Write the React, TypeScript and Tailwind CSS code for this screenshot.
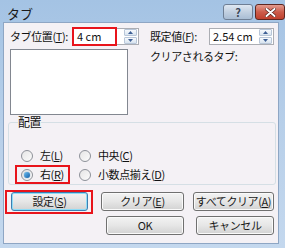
import React from "react";

function Spinner() {
  return (
    <div className="flex w-[13px] flex-col gap-px">
      <div className="flex h-[7px] items-center justify-center rounded-[1px] border border-[#b8c6d8] bg-gradient-to-b from-[#f7fafd] to-[#d8e3ef]">
        <svg width="5" height="3" viewBox="0 0 5 3">
          <path d="M0 3L2.5 0L5 3Z" fill="#3d5f95" />
        </svg>
      </div>
      <div className="flex h-[7px] items-center justify-center rounded-[1px] border border-[#b8c6d8] bg-gradient-to-b from-[#f7fafd] to-[#d8e3ef]">
        <svg width="5" height="3" viewBox="0 0 5 3">
          <path d="M0 0L2.5 3L5 0Z" fill="#3d5f95" />
        </svg>
      </div>
    </div>
  );
}

function Radio({ checked, children }: { checked?: boolean; children: React.ReactNode }) {
  return (
    <div className="flex items-center gap-[7px]">
      <span className="flex h-[12px] w-[12px] items-center justify-center rounded-full border border-[#8d9199] bg-gradient-to-br from-[#e6e6e6] to-[#fbfbfb]">
        {checked && (
          <span className="h-[6px] w-[6px] rounded-full bg-gradient-to-br from-[#6ec0f0] to-[#0d5ea8] shadow-[0_0_1px_#1b5ea0]" />
        )}
      </span>
      <span>{children}</span>
    </div>
  );
}

function Btn({ w, focused, children }: { w: string; focused?: boolean; children: React.ReactNode }) {
  return (
    <div
      className={`${w} flex h-[19px] items-center justify-center rounded-[3px] border bg-gradient-to-b from-[#f3f3f3] via-[#e6e6e6] to-[#d2d2d2] text-[#1a1a1a] ${
        focused ? "border-[#3c7fb1] shadow-[inset_0_0_0_1px_#8fdcf6]" : "border-[#707070] shadow-[inset_0_0_0_1px_#fafafa]"
      }`}
    >
      {children}
    </div>
  );
}

const U = ({ children }: { children: React.ReactNode }) => <span className="underline underline-offset-1">{children}</span>;

export default function App() {
  return (
    <div className="flex h-[248px] w-[285px] flex-col whitespace-nowrap bg-gradient-to-b from-[#a4c3e4] via-[#b7cfe9] to-[#c4d8ee] font-['Noto_Sans_CJK_JP','Liberation_Sans',sans-serif] text-[11px] leading-none tracking-[-0.4px] text-[#111]">
      {/* title bar */}
      <div className="flex h-[22px] items-start justify-between pl-[7px] pt-[4px]">
        <span className="pt-[3px] text-[13px] tracking-normal text-[#1b1b1b]">タブ</span>
        <div className="flex gap-[2px]">
          <div className="flex h-[16px] w-[30px] items-center justify-center rounded-[3px] border border-[#6f7f95] bg-gradient-to-b from-[#dfe8f2] via-[#c2d0e1] to-[#a9bdd4] text-[11px] font-bold text-[#3a4656]">
            ?
          </div>
          <div className="flex h-[16px] w-[30px] items-center justify-center rounded-[3px] border border-[#5e2720] bg-gradient-to-b from-[#e39c8f] via-[#cc5c4b] to-[#c0402d]">
            <svg width="11" height="9" viewBox="0 0 11 9">
              <path d="M1.5 1L9.5 8M9.5 1L1.5 8" stroke="#4b1b14" strokeWidth="3.2" strokeLinecap="round" />
              <path d="M1.5 1L9.5 8M9.5 1L1.5 8" stroke="#ffffff" strokeWidth="2" strokeLinecap="round" />
            </svg>
          </div>
        </div>
      </div>

      {/* client */}
      <div className="mb-[4px] ml-[3px] mr-[6px] flex flex-1 flex-col border border-[#8ea6c4] bg-[#f4f1f5] pt-[4px]">
        <div className="flex">
          {/* left column */}
          <div className="flex w-[146px] flex-col pl-[6px]">
            <div className="flex h-[19px] items-center">
              <span className="w-[62px]">
                タブ位置(<U>T</U>):
              </span>
              <div className="flex h-[19px] items-center">
                <div className="flex h-[19px] w-[45px] items-center border-2 border-[#e8141b] bg-white pl-[3px] tracking-normal">
                  4 cm
                </div>
                <div className="flex h-[17px] w-[22px] items-center justify-end border-y border-r border-[#abadb3] bg-white pr-px">
                  <Spinner />
                </div>
              </div>
            </div>
            <div className="mt-[3px] h-[66px] w-[118px] border border-[#828790] bg-white" />
          </div>
          {/* right column */}
          <div className="flex flex-col">
            <div className="flex h-[19px] items-center">
              <span className="w-[59px]">
                既定値(<U>F</U>):
              </span>
              <div className="flex h-[17px] w-[65px] items-center justify-between border border-[#abadb3] bg-white pl-[3px] pr-px tracking-normal">
                2.54 cm
                <Spinner />
              </div>
            </div>
            <span className="mt-[5px]">クリアされるタブ:</span>
          </div>
        </div>

        {/* group */}
        <fieldset className="mx-[4px] mt-[1px] w-[268px] rounded-[3px] border border-[#d5dfe5] pb-0 pl-[6px]">
          <legend className="ml-[3px] text-[12px]">配置</legend>
          <div className="mt-[18px] grid grid-cols-[55px_auto] gap-x-[3px]">
            <div className="flex h-[19px] items-center border-2 border-transparent pl-[4px]">
              <Radio>
                左(<U>L</U>)
              </Radio>
            </div>
            <div className="flex h-[19px] items-center border-2 border-transparent pl-[4px]">
              <Radio>
                中央(<U>C</U>)
              </Radio>
            </div>
            <div className="flex h-[19px] items-center border-2 border-[#e8141b] pl-[4px]">
              <Radio checked>
                右(<U>R</U>)
              </Radio>
            </div>
            <div className="flex h-[19px] items-center border-2 border-transparent pl-[4px]">
              <Radio>
                小数点揃え(<U>D</U>)
              </Radio>
            </div>
          </div>
        </fieldset>

        {/* buttons */}
        <div className="mt-[5px] flex items-start pl-px">
          <div className="border-2 border-[#e8141b] pb-px pl-[4px] pr-[3px]">
            <Btn w="w-[77px]" focused>
              設定(<U>S</U>)
            </Btn>
          </div>
          <div className="ml-[8px] mt-[2px]">
            <Btn w="w-[83px]">
              クリア(<U>E</U>)
            </Btn>
          </div>
          <div className="ml-[9px] mt-[2px]">
            <Btn w="w-[81px]">
              すべてクリア(<U>A</U>)
            </Btn>
          </div>
        </div>
        <div className="mt-[2px] flex pl-[102px]">
          <Btn w="w-[78px]">OK</Btn>
          <div className="ml-[12px]">
            <Btn w="w-[78px]">キャンセル</Btn>
          </div>
        </div>
      </div>
    </div>
  );
}
